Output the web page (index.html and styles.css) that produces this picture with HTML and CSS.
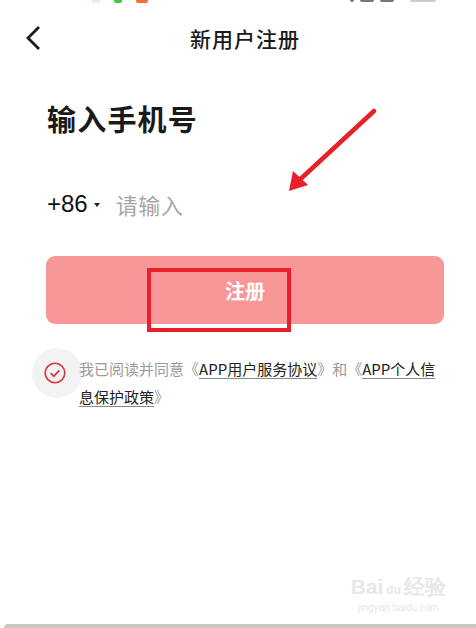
FILE: index.html
```html
<!DOCTYPE html>
<html>
  <head>
    <title>新用户注册</title>
    <meta charset="utf-8">
    <link rel="stylesheet" href="styles.css">
  </head>
  <body>
    <div class="page">
      <!-- what is left of the phone status bar -->
      <div class="status">
        <span class="dot blue"></span>
        <span class="dot green"></span>
        <span class="dot orange"></span>
        <span class="spacer"></span>
        <span class="dot dark"></span>
        <span class="dot dark wide"></span>
        <span class="dot dark wide"></span>
        <span class="dot gray"></span>
      </div>

      <div class="nav">
        <svg class="back" width="18" height="26" viewBox="0 0 18 26">
          <path d="M15 2 L4 13 L15 24" fill="none" stroke="#1a1a1a" stroke-width="2.8"/>
        </svg>
        <div class="navTitle">新用户注册</div>
        <div></div>
      </div>

      <div class="content">
        <h1 class="heading">输入手机号</h1>

        <div class="phoneRow">
          <span class="code">+86</span>
          <span class="caret"></span>
          <span class="placeholder">请输入</span>
        </div>

        <div class="submitBtn">注册</div>

        <div class="agree">
          <div class="checkWrap">
            <svg width="22" height="22" viewBox="0 0 22 22">
              <circle cx="11" cy="11" r="9.8" fill="none" stroke="#d83a3e" stroke-width="1.6"/>
              <path d="M6.6 11.2 L9.8 14.2 L15.4 8.4" fill="none" stroke="#d83a3e" stroke-width="1.7"/>
            </svg>
          </div>
          <p class="agreeText"><span>我已阅读并同意《</span><span class="link">APP用户服务协议</span><span>》和《</span><span class="link">APP个人信息保护政策</span><span>》</span></p>
        </div>
      </div>

      <div class="watermark">
        <div class="wmLogo">Bai<span class="paw">du</span>经验</div>
        <div class="wmUrl">jingyan.baidu.com</div>
      </div>

      <div class="bottomBar"></div>

      <!-- red annotation drawn over the screenshot -->
      <svg class="marks" width="476" height="628" viewBox="0 0 476 628">
        <path d="M374 111 L293 186" stroke="#e8202a" stroke-width="4.5" stroke-linecap="round" fill="none"/>
        <path d="M289 191 L293 171 L308 185 Z" fill="#e8202a"/>
        <rect x="149" y="270" width="140" height="60" fill="none" stroke="#e8202a" stroke-width="4"/>
      </svg>
    </div>
  </body>
</html>
```

FILE: styles.css
```css
* {
  box-sizing: border-box;
}

body {
  margin: 0;
  background: #fff;
  font-family: "Noto Sans CJK SC", "Noto Sans", sans-serif;
  color: #1a1a1a;
}

.page {
  position: relative;
  width: 476px;
  height: 628px;
  display: flex;
  flex-direction: column;
  overflow: hidden;
}

/* Status bar, cut off at the top */
.status {
  height: 10px;
  display: flex;
  align-items: flex-start;
  gap: 6px;
  padding-left: 92px;
  padding-right: 40px;
}

.dot {
  width: 8px;
  height: 3px;
  border-radius: 0 0 2px 2px;
}

.blue { background: #d8f1fb; margin-right: 8px; }
.green { background: #4ac43c; }
.orange { background: #f4713a; margin-left: 8px; width: 12px; }
.spacer { flex: 1; }
.dark { background: #777; width: 4px; height: 2px; }
.dark.wide { width: 14px; }
.gray { background: #ccc; width: 26px; height: 2px; margin-left: 10px; }

/* Top navigation */
.nav {
  height: 56px;
  display: grid;
  grid-template-columns: 60px 1fr 46px;
  align-items: center;
}

.back {
  margin-left: 24px;
}

.navTitle {
  text-align: center;
  font-size: 21px;
  font-weight: 500;
  letter-spacing: 1px;
}

.content {
  padding: 0 32px 0 47px;
}

.heading {
  margin: 32px 0 0 0;
  font-size: 29px;
  line-height: 40px;
  font-weight: 700;
  letter-spacing: 1.2px;
}

/* Phone number row */
.phoneRow {
  margin-top: 51px;
  height: 30px;
  display: flex;
  align-items: center;
  font-size: 22px;
}

.code {
  color: #111;
  font-family: "Liberation Sans", sans-serif;
  font-size: 24px;
}

.caret {
  width: 0;
  height: 0;
  margin: 2px 16px 0 6px;
  border-left: 3px solid transparent;
  border-right: 3px solid transparent;
  border-top: 4px solid #222;
}

.placeholder {
  color: #a6a6a6;
  letter-spacing: 0.5px;
}

/* Register button */
.submitBtn {
  margin: 37px 0 0 -1px;
  height: 68px;
  border-radius: 9px;
  background: #f89798;
  color: #fff;
  font-size: 20px;
  font-weight: 700;
  display: flex;
  align-items: center;
  justify-content: center;
}

/* Agreement */
.agree {
  margin-top: 24px;
  margin-left: -15px;
  display: flex;
  align-items: flex-start;
}

.checkWrap {
  flex: none;
  width: 50px;
  height: 50px;
  border-radius: 50%;
  background: #f3f3f3;
  display: flex;
  align-items: center;
  justify-content: center;
  padding-right: 5px;
}

.agreeText {
  margin: 7px 0 0 -3px;
  font-size: 15px;
  line-height: 27.5px;
  color: #9a9a9a;
}

.link {
  color: #222;
  text-decoration: underline;
  text-decoration-color: #888;
  text-underline-offset: 3px;
}

/* Baidu watermark */
.watermark {
  position: absolute;
  right: 30px;
  bottom: 14px;
  color: #e8e8e8;
  text-align: center;
  font-family: "Liberation Sans", sans-serif;
}

.wmLogo {
  font-size: 21px;
  font-weight: 700;
  line-height: 24px;
}

.paw {
  font-size: 12px;
  margin: 0 3px;
}

.wmUrl {
  font-size: 10px;
  line-height: 12px;
}

.bottomBar {
  margin-top: auto;
  height: 4px;
  margin-left: 4px;
  border-radius: 4px 0 0 0;
  background: #c9c5c0;
}

.marks {
  position: absolute;
  left: 0;
  top: 0;
}
```
